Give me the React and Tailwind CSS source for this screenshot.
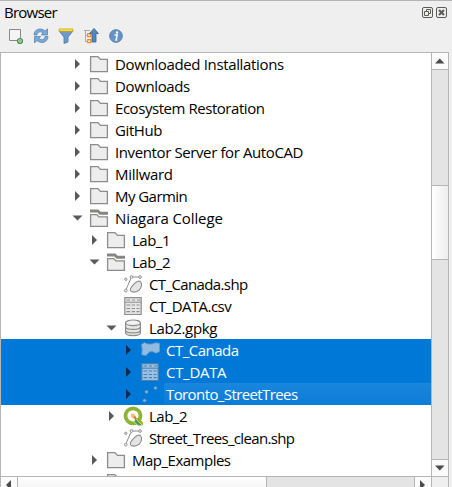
import React from "react";

const items = [
  { name: "Downloaded Installations", depth: 0, icon: "folder", arrow: "right", track: "tracking-[-0.35px]" },
  { name: "Downloads", depth: 0, icon: "folder", arrow: "right", track: "tracking-[-0.37px]" },
  { name: "Ecosystem Restoration", depth: 0, icon: "folder", arrow: "right", track: "tracking-[-0.45px]" },
  { name: "GitHub", depth: 0, icon: "folder", arrow: "right", track: "tracking-[-0.4px]" },
  { name: "Inventor Server for AutoCAD", depth: 0, icon: "folder", arrow: "right", track: "tracking-[-0.39px]" },
  { name: "Millward", depth: 0, icon: "folder", arrow: "right", track: "tracking-[-0.3px]" },
  { name: "My Garmin", depth: 0, icon: "folder", arrow: "right", track: "tracking-[-0.55px]" },
  { name: "Niagara College", depth: 0, icon: "open", arrow: "down", track: "tracking-[-0.1px]" },
  { name: "Lab_1", depth: 1, icon: "folder", arrow: "right", track: "tracking-[-0.5px]" },
  { name: "Lab_2", depth: 1, icon: "open", arrow: "down", track: "tracking-[-0.5px]" },
  { name: "CT_Canada.shp", depth: 2, icon: "vector", track: "tracking-[-0.62px]" },
  { name: "CT_DATA.csv", depth: 2, icon: "table", track: "tracking-[-0.55px]" },
  { name: "Lab2.gpkg", depth: 2, icon: "database", arrow: "down", track: "tracking-[-0.35px]" },
  { name: "CT_Canada", depth: 3, icon: "polygon", arrow: "right", selected: true, track: "tracking-[-0.5px]" },
  { name: "CT_DATA", depth: 3, icon: "table", arrow: "right", selected: true, track: "tracking-[-0.3px]" },
  { name: "Toronto_StreetTrees", depth: 3, icon: "points", arrow: "right", selected: true, current: true, track: "tracking-[-0.6px]" },
  { name: "Lab_2", depth: 2, icon: "qgis", arrow: "right", track: "tracking-[-0.5px]" },
  { name: "Street_Trees_clean.shp", depth: 2, icon: "vector", track: "tracking-[-0.66px]" },
  { name: "Map_Examples", depth: 1, icon: "folder", arrow: "right", track: "tracking-[-0.5px]" },
  { name: "", depth: 1, icon: "folder", track: "" },
];

const indents = ["pl-[68px]", "pl-[85px]", "pl-[102px]", "pl-[119px]"];

function Icon({ kind, selected }) {
  const line = selected ? "#4d7fa9" : "#8c8c8a";
  const fill = selected ? "#91bde3" : "#ededed";
  return (
    <svg width="18" height="18" viewBox="0 0 18 18" className="shrink-0 overflow-visible" fill="none" stroke={line}>
      {kind === "folder" && <path d="M.6 1.6H8l2.4 2.8h7v12.3H.6z" fill={fill} strokeWidth="1.3" />}
      {kind === "open" && (
        <>
          <path d="M0 .5h8.5l2 2.2H18v3h-8.5L7.5 3.5H0z" fill="#858583" stroke="none" />
          <path d="M.6 5.6h6.2l2 2.2h8.6v9.6H.6z" fill={fill} strokeWidth="1.3" />
        </>
      )}
      {kind === "vector" && (
        <>
          <path d="M2.2 14.2 6.8 3.500M8.500 2h6" strokeWidth="1" />
          <circle cx="1.800" cy="4.300" r="1.200" fill="#ddd" strokeWidth=".9" />
          <circle cx="7.500" cy="2" r="1.400" fill="#eee" strokeWidth=".9" />
          <circle cx="16" cy="2" r="1.400" fill="#eee" strokeWidth=".9" />
          <circle cx="1.800" cy="15.600" r="1.400" fill="#eee" strokeWidth=".9" />
          <path d="M14.300 6.200c2.400-.3 3.400 1.600 3.200 4.200-.3 3.700-3.500 6.600-7.500 6.700-3.500 0-4.800-2.200-2.900-4.600 1.600-2 3.900-5.900 7.200-6.300z" fill="#e4e4e4" strokeWidth="1.100" />
        </>
      )}
      {kind === "table" && (
        <>
          <path d="M.8.700h16.400v16.800H.8z" fill={selected ? "#9ac3e6" : "#e6e6e6"} strokeWidth="1.200" />
          <path d="M1 5.200h16" />
          <path d="M7 6v11" stroke={selected ? "#8ab4d8" : "#d2d2d2"} />
          <path d="M2.500 3h3.500M8 3h3M13 3h3M2.500 8h3.500M8 8h3M12.500 8h3M2.500 11.500h3.500M8 11.500h3M12.500 11.500h3M2.500 14.700h3.500M8 14.700h3M12.500 14.700h3" strokeWidth="1.200" />
        </>
      )}
      {kind === "database" && (
        <>
          <path d="M1.600 3.800v10c0 3.700 14.800 3.700 14.800 0v-10" fill="#e6e6e6" strokeWidth="1.200" />
          <ellipse cx="9" cy="3.800" rx="7.400" ry="2.800" fill="#f2f2f2" strokeWidth="1.200" />
          <path d="M1.600 8c0 3.200 14.800 3.200 14.800 0M1.600 11.500c0 3.200 14.800 3.200 14.800 0" strokeWidth="1.200" />
        </>
      )}
      {kind === "polygon" && (
        <path d="M.5 3.500 3.500 1.500c3 2.200 7.500 2 11 .2l4 .6v8.400l-3.800 1.500c-2.500-2-6-2.200-7.500 0L5 14.500l-4.300-.8.500-5z" fill="#91bbe0" stroke="#6699c6" />
      )}
      {kind === "points" && (
        <g fill="#8dbbe3" stroke="#4684b8" strokeWidth=".9">
          <circle cx="3.500" cy="15.500" r="1.600" /><circle cx="5.500" cy="6.800" r="1.600" /><circle cx="14.500" cy="3" r="1.600" />
        </g>
      )}
      {kind === "qgis" && (
        <>
          <circle cx="9" cy="8.800" r="7.500" fill="#fff" stroke="#8cb435" strokeWidth="3.800" />
          <path d="m11 11 7.800 7.800h-4.600l-4-4z" fill="#549b37" stroke="#fff" strokeWidth=".6" />
          <path d="m11.500 11 3.300.3 4 3.900v3.300z" fill="#93b023" stroke="none" />
          <path d="M7 6.800h2.800l2 2.400-2.500 2.500L7 9.500z" fill="#f3c06c" stroke="none" />
          <path d="m9.500 9.300 2.300.2 1.200 3-3-1z" fill="#e4762f" stroke="none" />
        </>
      )}
    </svg>
  );
}

function Arrow({ dir, selected }) {
  return (
    <svg width="15" height="14" viewBox="0 0 15 14" className="mr-1.5 shrink-0" fill={selected ? "#0b2c50" : "#595959"}>
      {dir === "right" && <path d="M6 2v10l5-5z" />}
      {dir === "down" && <path d="M3.500 4.500h10l-5 5z" />}
    </svg>
  );
}

function Row({ item }) {
  return (
    <div className={`flex h-[22px] shrink-0 items-center ${indents[item.depth]} ${item.selected ? "bg-[#0078d7] text-white" : "text-black"}`}>
      <Arrow dir={item.arrow} selected={item.selected} />
      <Icon kind={item.icon} selected={item.selected} />
      <span className={`ml-[5px] flex h-[22px] items-center whitespace-nowrap pl-0.5 pt-px ${item.current ? "flex-1 rounded-l-xs bg-linear-to-b from-[#1a86dc] to-[#0a7cd8]" : ""} ${item.track}`}>
        {item.name}
      </span>
    </div>
  );
}

function Toolbar() {
  return (
    <div className="flex h-[26px] items-center gap-[7px] pl-[7px]">
      <svg width="18" height="18" viewBox="0 0 18 18" fill="none">
        <path d="M2.500 2.500h11v11h-11z" fill="#f4f4f4" stroke="#888a85" />
        <circle cx="13" cy="14" r="2.400" fill="#e5f1e3" stroke="#4f9150" strokeWidth="1.400" />
        <path d="M13 12.800v2.400M11.800 14h2.400" stroke="#65a565" strokeWidth=".8" />
      </svg>
      <svg width="18" height="18" viewBox="0 0 18 18" fill="#79a9d8" stroke="#4f7eb0" strokeWidth=".7">
        <path d="M2 8C2 2 9 .2 13 4l2.500-2.200V8H9.300L11 6C8.500 3.700 5.500 5 5 8z" />
        <path d="M16 9.500c0 6-7 7.800-11 4L2.500 16V9.500h6.200L7 11.500c2.500 2.300 5.500 1 6-2z" />
      </svg>
      <svg width="18" height="18" viewBox="0 0 18 18">
        <path d="M2 4h14l-5 6v5l-4 1.500V10z" fill="#6f9ac6" stroke="#4677a8" strokeWidth=".8" />
        <path d="M2 2h14v2.300H2z" fill="#fce94f" stroke="#c4a000" strokeWidth=".7" />
      </svg>
      <svg width="18" height="18" viewBox="0 0 18 18" fill="none">
        <path d="M3.500 3v12M2 3.500h6M3.500 8.500H6M3.500 14.500H6" stroke="#aaa" />
        <path d="M5.700 6.700h3v3h-3zM5.700 12.700h3v3h-3z" stroke="#f08c24" strokeWidth="1.200" />
        <path d="m12 1.500 4.500 5H14v8.500h-4V6.500H7.500z" fill="#5a86b5" stroke="#345f8c" strokeWidth=".8" />
      </svg>
      <svg width="18" height="18" viewBox="0 0 18 18">
        <circle cx="9" cy="9" r="6.300" fill="#6793c4" stroke="#567fae" />
        <circle cx="10" cy="5.500" r="1.200" fill="#fff" /><path d="M7.500 8h2.800L9 13h1.300" fill="none" stroke="#fff" strokeWidth="1.400" />
      </svg>
    </div>
  );
}

function ScrollArrow({ d }) {
  return <svg width="16" height="16" viewBox="0 0 16 16" fill="#4b4b4b" className="shrink-0 bg-[#fbfbfb]"><path d={d} /></svg>;
}

export default function App() {
  return (
    <div className="flex h-[487px] w-[452px] flex-col overflow-hidden border-t border-[#b4b4b4] bg-[#efefef] font-['Open_Sans','Noto_Sans',sans-serif] text-[15px] text-black">
      <div className="flex h-[22px] items-center justify-between pl-1 pr-[5px]">
        <span className="tracking-[-0.75px]">Browser</span>
        <div className="flex gap-[3px]">
          <svg width="11" height="11" viewBox="0 0 11 11" fill="none" stroke="#5b5b55"><rect x=".5" y=".5" width="10" height="10" rx="1.500" /><path d="M4.500 4V2.500h4v4H7M2.500 4.500h4v4h-4z" /></svg>
          <svg width="11" height="11" viewBox="0 0 11 11" fill="none" stroke="#5b5b55"><rect x=".5" y=".5" width="10" height="10" rx="1.500" /><path d="m3 3 5 5m0-5L3 8" strokeWidth="2" /></svg>
        </div>
      </div>
      <Toolbar />
      <div className="mt-[3px] flex h-[435px] w-[449px] flex-col border-x border-t border-[#b5b5b5] bg-white">
        <div className="flex h-[423px] shrink-0">
          <div className="flex min-w-0 flex-1 flex-col overflow-hidden">
            {items.map((item, i) => <Row key={i} item={item} />)}
          </div>
          <div className="flex w-[17px] shrink-0 flex-col border-l border-[#b5b5b5] bg-[#e4e4e4]">
            <div className="border-b border-[#b5b5b5]"><ScrollArrow d="M3 10.500h9.500l-4.750-5z" /></div>
            <div className="mt-[115px] h-[75px] border-y border-[#b5b5b5] bg-linear-to-r from-white to-[#ededed]" />
            <div className="mt-auto border-t border-[#b5b5b5]"><ScrollArrow d="M3 5.500h9.500l-4.750 5z" /></div>
          </div>
        </div>
        <div className="flex h-[11px] shrink-0 overflow-hidden border-t border-[#b5b5b5] bg-[#e4e4e4]">
          <ScrollArrow d="M10 3v10L5 8z" />
          <div className="h-4 w-[250px] border-x border-[#b5b5b5] bg-linear-to-b from-white to-[#f0f0f0]" />
          <div className="ml-auto flex border-x border-[#b5b5b5]"><ScrollArrow d="M5 3v10l5-5z" /></div>
          <div className="w-4 bg-[#efefef]" />
        </div>
      </div>
    </div>
  );
}
